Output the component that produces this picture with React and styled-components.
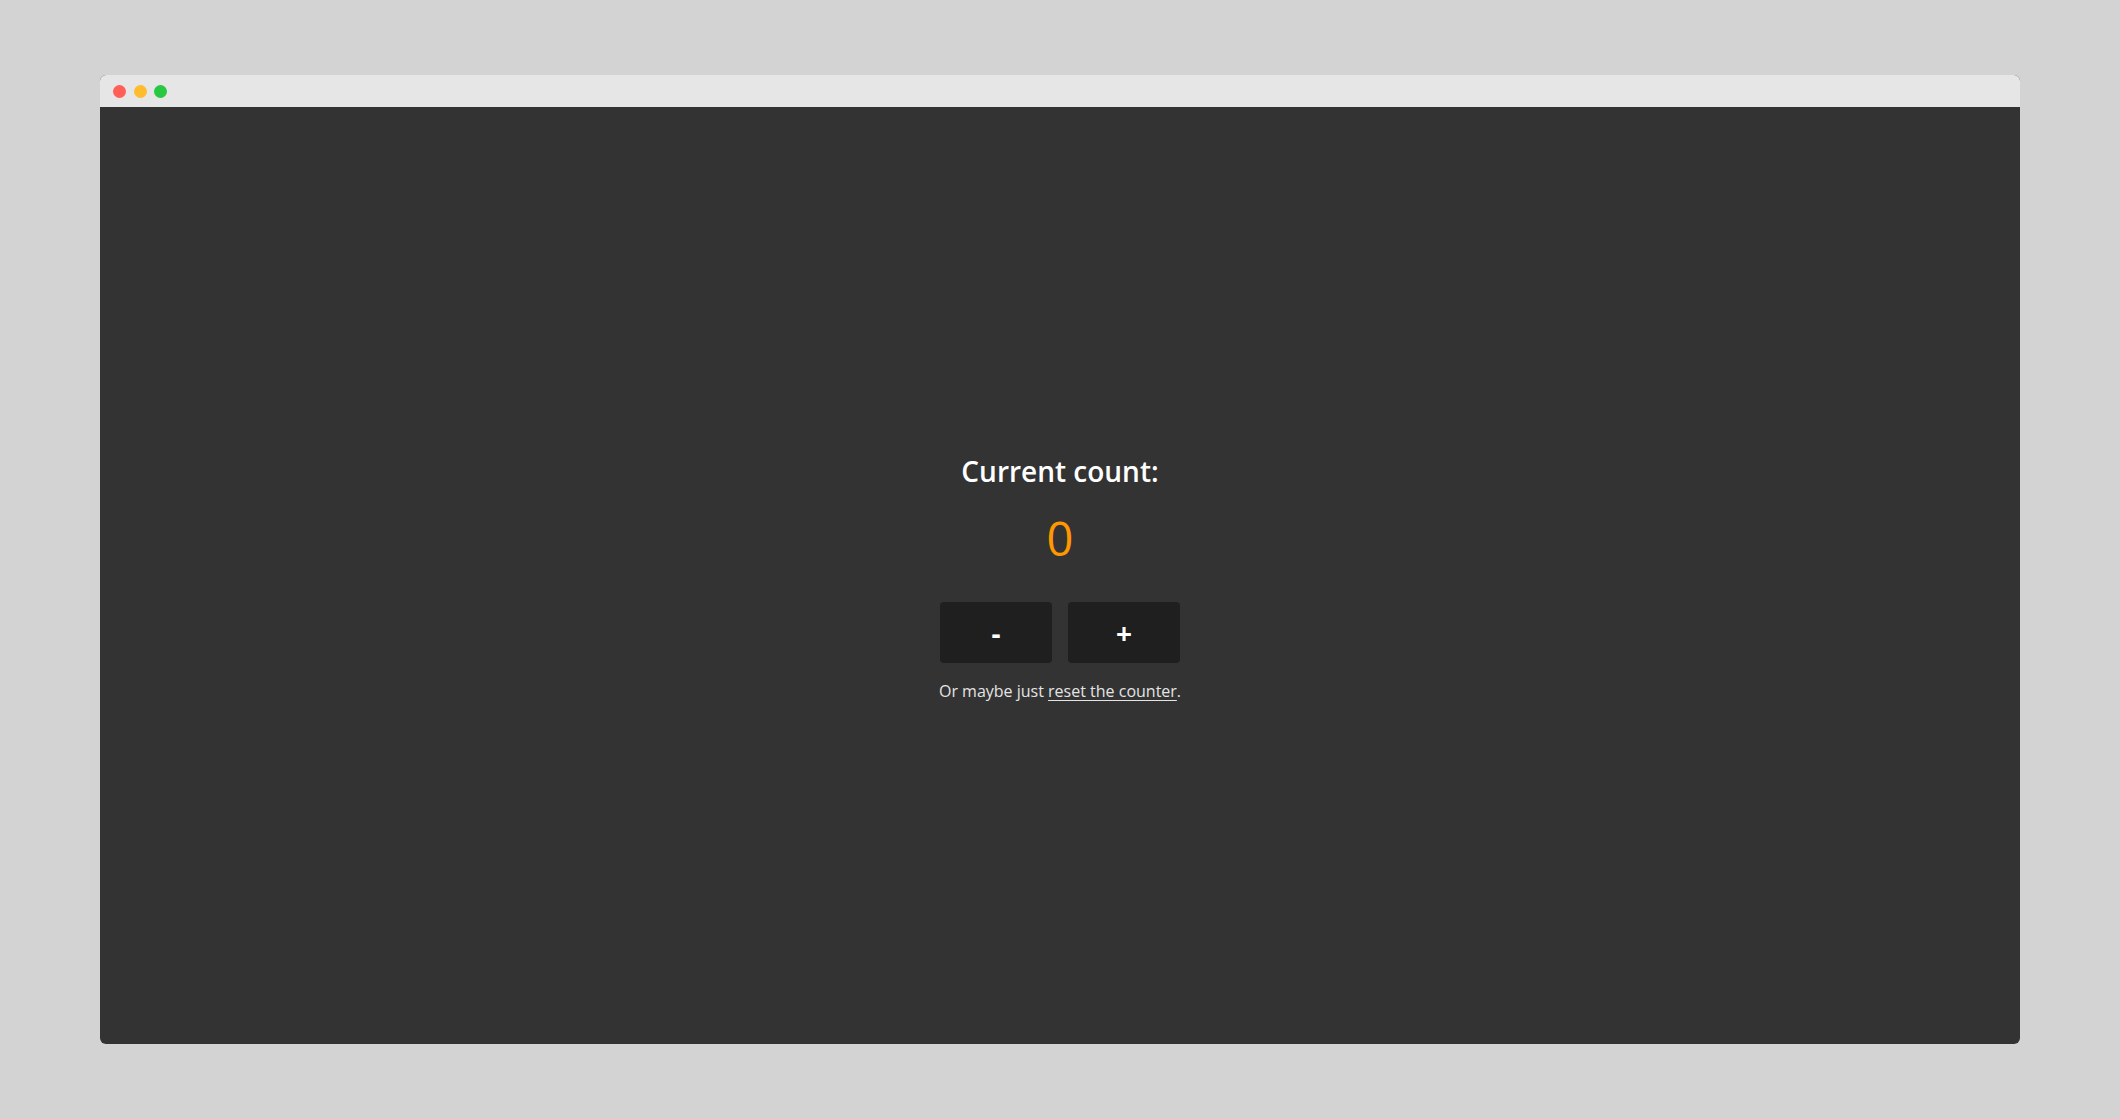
import React, { useState } from 'react'
import styled, { createGlobalStyle } from 'styled-components'

const Global = createGlobalStyle`
    html, body {
        margin: 0;
        background: #d3d3d3;
        font-family: "Open Sans", "Noto Sans", sans-serif;
    }
`

const Page = styled.div`
    padding: 75px 100px;
    height: 1119px;
    box-sizing: border-box;
`

const Window = styled.div`
    display: flex;
    flex-direction: column;
    height: 969px;
    border-radius: 6px;
    overflow: hidden;
    background: #333333;
`

const TitleBar = styled.div`
    display: flex;
    align-items: center;
    gap: 7.5px;
    height: 32px;
    padding-left: 13px;
    background: #e6e6e6;
`

const Dot = styled.span`
    width: 13px;
    height: 13px;
    border-radius: 50%;
    background: ${p => p.color};
`

const Content = styled.div`
    flex: 1;
    display: flex;
    flex-direction: column;
    align-items: center;
    justify-content: center;
    padding-top: 3px;
    color: #fff;
`

const Heading = styled.h2`
    margin: 0;
    font-size: 28px;
    font-weight: 600;
    line-height: 38px;
`

const Count = styled.div`
    margin-top: 18px;
    font-size: 47px;
    line-height: 60px;
    color: #ff9800;
`

const Buttons = styled.div`
    display: flex;
    gap: 16px;
    margin-top: 34px;
`

const Button = styled.button`
    width: 112px;
    height: 61px;
    border: none;
    border-radius: 4px;
    background: #1f1f1f;
    color: #fff;
    font-family: inherit;
    font-size: 28px;
    font-weight: 700;
    cursor: pointer;
`

const Note = styled.p`
    margin: 17px 0 0;
    font-size: 16px;
    color: #e4e4e4;
`

const Reset = styled.a`
    color: #e4e4e4;
    text-decoration: underline;
    text-underline-offset: 3px;
    cursor: pointer;
`

export default function App() {
    const [count, setCount] = useState(0)
    return (
        <Page>
            <Global />
            <Window>
                <TitleBar>
                    <Dot color="#ff5f57" />
                    <Dot color="#febc2e" />
                    <Dot color="#28c840" />
                </TitleBar>
                <Content>
                    <Heading>Current count:</Heading>
                    <Count>{count}</Count>
                    <Buttons>
                        <Button onClick={() => setCount(count - 1)}>-</Button>
                        <Button onClick={() => setCount(count + 1)}>+</Button>
                    </Buttons>
                    <Note>
                        Or maybe just <Reset onClick={() => setCount(0)}>reset the counter</Reset>.
                    </Note>
                </Content>
            </Window>
        </Page>
    )
}
